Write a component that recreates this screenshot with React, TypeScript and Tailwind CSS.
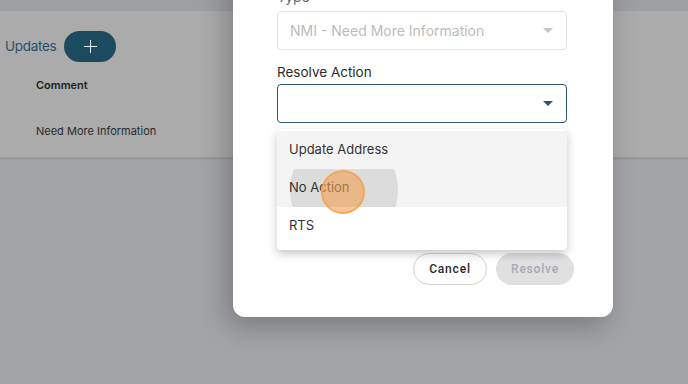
import React from 'react'

function Caret({ color }: { color: string }) {
  return (
    <svg width="10" height="5" viewBox="0 0 10 5" className="shrink-0">
      <path d="M0 0 L10 0 L5 5 Z" fill={color} />
    </svg>
  )
}

const options = ['Update Address', 'No Action', 'RTS']

export default function App() {
  return (
    <div className="relative w-[688px] h-[384px] overflow-hidden bg-[#a3a4a7] font-['Inter','Roboto',sans-serif]">
      {/* page behind the overlay */}
      <div className="h-[11px] bg-[#9d9fa2]" />
      <div className="h-[147px] bg-[#ababab] border-b border-[#9b9c9e] shadow-[0_1px_2px_rgba(0,0,0,0.12)]">
        <div className="flex items-center pl-[5px] pt-[20px]">
          <span className="text-[13.5px] text-[#27506b] tracking-[-0.3px]">Updates</span>
          <button className="ml-[8px] w-[52px] h-[31px] rounded-full bg-[#1c4a5e] flex items-center justify-center">
            <svg width="15" height="15" viewBox="0 0 16 16">
              <path d="M8 1 V15 M1 8 H15" stroke="#e6ecef" strokeWidth="1.1" />
            </svg>
          </button>
        </div>
        <div className="pl-[36px] pt-[15px] text-[11px] font-semibold text-[#1f1f1f]">Comment</div>
        <div className="pl-[36px] pt-[29px] text-[11px] text-[#2a2a2a]">Need More Information</div>
      </div>

      {/* modal */}
      <div className="absolute left-[233px] top-[-40px] w-[380px] h-[357px] bg-white rounded-[12px] shadow-[-6px_10px_28px_rgba(0,0,0,0.25)] flex flex-col px-[44px] pt-[28px]">
        <div className="text-[14px] leading-[17px] text-[#6b6b6b]">Type</div>
        <div className="mt-[6px] h-[39px] w-[290px] rounded-[4px] border border-[#e2e2e2] flex items-center justify-between pl-[12px] pr-[13px]">
          <span className="text-[14px] text-[#bcbcbc]">NMI - Need More Information</span>
          <Caret color="#c4c4c4" />
        </div>
        <div className="mt-[14px] text-[13.5px] leading-[17px] text-[#2b2b2b]">Resolve Action</div>
        <div className="mt-[3px] h-[39px] w-[290px] rounded-[4px] border border-[#2d5566] flex items-center justify-end pr-[13px]">
          <Caret color="#2d5566" />
        </div>
        <div className="mt-[130px] flex justify-end gap-[9px] mr-[-5px] font-['Roboto',sans-serif]">
          <button className="w-[74px] h-[32px] rounded-full border border-[#d4d4d4] bg-white text-[12px] font-medium tracking-[0.8px] text-[#2a2a2a]">
            Cancel
          </button>
          <button className="w-[78px] h-[32px] rounded-full bg-[#e0e0e0] text-[12px] font-medium tracking-[0.8px] text-[#a4abb8]">
            Resolve
          </button>
        </div>
      </div>

      {/* open dropdown menu */}
      <div className="absolute left-[277px] top-[129px] w-[290px] bg-white rounded-[4px] shadow-[0_4px_10px_rgba(0,0,0,0.22)] pt-[2px] pb-[5px]">
        {options.map((o, i) => (
          <div
            key={o}
            className={`relative h-[38px] flex items-center pl-[12px] overflow-hidden text-[13px] text-[#333333] ${
              i < 2 ? 'bg-[#f4f4f4]' : 'bg-white'
            }`}
          >
            {i === 1 && (
              <div className="absolute left-[13px] top-[-33px] w-[108px] h-[108px] rounded-full bg-[#dcdcdc]" />
            )}
            <span className="relative">{o}</span>
          </div>
        ))}
      </div>

      {/* click indicator */}
      <div className="absolute left-[321px] top-[170px] w-[44px] h-[44px] rounded-full bg-[rgba(242,160,82,0.6)] border-2 border-[rgba(244,162,84,0.85)]" />
    </div>
  )
}
